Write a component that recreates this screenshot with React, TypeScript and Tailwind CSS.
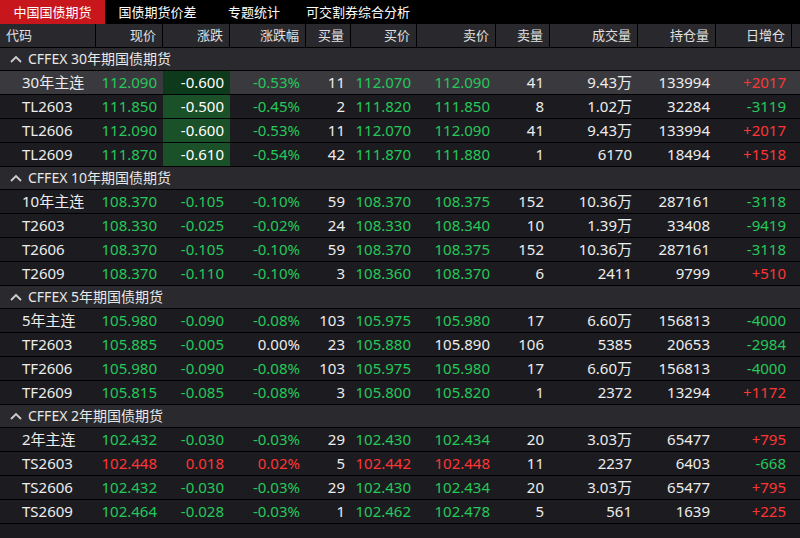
import React from "react";

const W = [96, 67, 67, 76, 45, 66, 79, 54, 88, 78, 76];
const HEAD = ["代码", "现价", "涨跌", "涨跌幅", "买量", "买价", "卖价", "卖量", "成交量", "持仓量", "日增仓"];

type C = "g" | "r" | "w";
type Row = { v: string[]; c: C[]; hl?: boolean; sel?: boolean };

const mk = (v: string[], c: string, hl = false, sel = false): Row => ({ v, c: c.split("") as C[], hl, sel });

const groups: { title: string; rows: Row[] }[] = [
  {
    title: "CFFEX 30年期国债期货",
    rows: [
      mk(["30年主连", "112.090", "-0.600", "-0.53%", "11", "112.070", "112.090", "41", "9.43万", "133994", "+2017"], "wgwgwggwwwr", true, true),
      mk(["TL2603", "111.850", "-0.500", "-0.45%", "2", "111.820", "111.850", "8", "1.02万", "32284", "-3119"], "wgwgwggwwwg", true),
      mk(["TL2606", "112.090", "-0.600", "-0.53%", "11", "112.070", "112.090", "41", "9.43万", "133994", "+2017"], "wgwgwggwwwr", true),
      mk(["TL2609", "111.870", "-0.610", "-0.54%", "42", "111.870", "111.880", "1", "6170", "18494", "+1518"], "wgwgwggwwwr", true),
    ],
  },
  {
    title: "CFFEX 10年期国债期货",
    rows: [
      mk(["10年主连", "108.370", "-0.105", "-0.10%", "59", "108.370", "108.375", "152", "10.36万", "287161", "-3118"], "wgggwggwwwg"),
      mk(["T2603", "108.330", "-0.025", "-0.02%", "24", "108.330", "108.340", "10", "1.39万", "33408", "-9419"], "wgggwggwwwg"),
      mk(["T2606", "108.370", "-0.105", "-0.10%", "59", "108.370", "108.375", "152", "10.36万", "287161", "-3118"], "wgggwggwwwg"),
      mk(["T2609", "108.370", "-0.110", "-0.10%", "3", "108.360", "108.370", "6", "2411", "9799", "+510"], "wgggwggwwwr"),
    ],
  },
  {
    title: "CFFEX 5年期国债期货",
    rows: [
      mk(["5年主连", "105.980", "-0.090", "-0.08%", "103", "105.975", "105.980", "17", "6.60万", "156813", "-4000"], "wgggwggwwwg"),
      mk(["TF2603", "105.885", "-0.005", "0.00%", "23", "105.880", "105.890", "106", "5385", "20653", "-2984"], "wggwwgwwwwg"),
      mk(["TF2606", "105.980", "-0.090", "-0.08%", "103", "105.975", "105.980", "17", "6.60万", "156813", "-4000"], "wgggwggwwwg"),
      mk(["TF2609", "105.815", "-0.085", "-0.08%", "3", "105.800", "105.820", "1", "2372", "13294", "+1172"], "wgggwggwwwr"),
    ],
  },
  {
    title: "CFFEX 2年期国债期货",
    rows: [
      mk(["2年主连", "102.432", "-0.030", "-0.03%", "29", "102.430", "102.434", "20", "3.03万", "65477", "+795"], "wgggwggwwwr"),
      mk(["TS2603", "102.448", "0.018", "0.02%", "5", "102.442", "102.448", "11", "2237", "6403", "-668"], "wrrrwrrwwwg"),
      mk(["TS2606", "102.432", "-0.030", "-0.03%", "29", "102.430", "102.434", "20", "3.03万", "65477", "+795"], "wgggwggwwwr"),
      mk(["TS2609", "102.464", "-0.028", "-0.03%", "1", "102.462", "102.478", "5", "561", "1639", "+225"], "wgggwggwwwr"),
    ],
  },
];

const col = (c: C) => (c === "g" ? "text-[#25c85a]" : c === "r" ? "text-[#ff3535]" : "text-[#ededed]");

export default function App() {
  return (
    <div className="w-[800px] h-[538px] overflow-hidden bg-[#1b1b1f] text-[15px] leading-none" style={{ fontFamily: '"Noto Sans", "Noto Sans CJK SC", sans-serif' }}>
      <div className="flex h-[24px] bg-black text-[13px] text-white">
        <div className="w-[105px] bg-[#c8161d] flex items-center justify-center">中国国债期货</div>
        <div className="w-[105px] flex items-center justify-center">国债期货价差</div>
        <div className="w-[88px] flex items-center justify-center">专题统计</div>
        <div className="w-[120px] flex items-center justify-center">可交割券综合分析</div>
      </div>
      <div className="flex h-[24px] bg-[#29292d] text-[13px] text-[#e0e0e0] border-b border-black">
        {HEAD.map((h, i) => (
          <div key={i} style={{ width: W[i] }} className={`flex items-center border-r border-black ${i === 0 ? "justify-start pl-[6px]" : "justify-end pr-[6px]"}`}>
            {h}
          </div>
        ))}
        <div className="flex-1" />
      </div>
      {groups.map((g) => (
        <div key={g.title}>
          <div className="h-[23px] bg-[#2a2a2e] flex items-center pl-[10px] text-[14px] text-[#e8e8e8] border-b border-black">
            <svg width="12" height="8" viewBox="0 0 12 8" className="mr-[6px]">
              <path d="M1 7 L6 2 L11 7" fill="none" stroke="#cfcfcf" strokeWidth="1.8" />
            </svg>
            {g.title}
          </div>
          {g.rows.map((r, ri) => (
            <div key={ri} className={`flex h-[24px] border-b border-black ${r.sel ? "bg-[#3a3a3e]" : "bg-[#1c1c20]"}`}>
              {r.v.map((v, i) => (
                <div
                  key={i}
                  style={{ width: W[i] }}
                  className={`flex items-center ${i === 0 ? "justify-start pl-[22px]" : "justify-end pr-[6px]"} ${col(r.c[i])} ${
                    i === 2 && r.hl ? (ri === 0 ? "bg-[#0e3a1c] text-white" : "bg-[#1b5128] text-white") : ""
                  }`}
                >
                  {v}
                </div>
              ))}
              <div className="flex-1" />
            </div>
          ))}
        </div>
      ))}
    </div>
  );
}
